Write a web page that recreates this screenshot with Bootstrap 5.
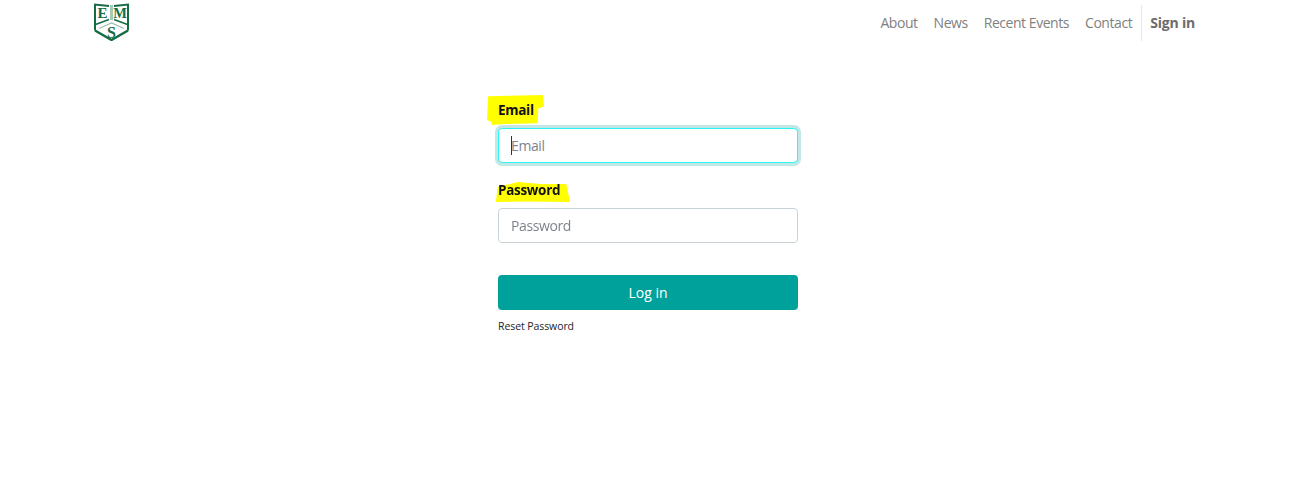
<!DOCTYPE html>
<html lang="en">
<head>
<meta charset="utf-8">
<title>Sign in</title>
<link href="https://cdn.jsdelivr.net/npm/bootstrap@5.3.0/dist/css/bootstrap.min.css" rel="stylesheet">
<style>
body { font-family: "Open Sans", "Noto Sans", sans-serif; background: #fff; color: #212529; font-size: 14px; }
.navbar.top-shell { width: 1299px; padding: 0 104px 0 93px; height: 46px; }
.brand-mark { width: 37px; height: 41px; display: block; }
.brand-link { padding: 0; margin: 0; align-self: flex-start; }
.menu-link { color: #7f7f7f; font-size: 14px; padding: 0 8px; height: 36px; line-height: 36px; letter-spacing: -.45px; text-decoration: none; }
.menu-contact { padding-right: 9px; }
.menu-signin { color: #6c6c6c; font-weight: 700; border-left: 1px solid #e7e7e7; padding-left: 8px; padding-right: 0; letter-spacing: -.2px; }
.form-shell { width: 300px; margin: 52px 0 0 498px; }
.mark-wrap { position: relative; display: block; height: 24px; margin-bottom: 6px; }
.mark-text { position: relative; font-size: 13.5px; font-weight: 700; line-height: 24px; color: #111; letter-spacing: -.3px; }
.swipe { position: absolute; background: #ffff00; }
.swipe-email { left: -11px; top: -3px; width: 57px; height: 30px; clip-path: polygon(2% 4%, 98% 0, 100% 38%, 90% 45%, 89% 94%, 30% 97%, 9% 100%, 7% 88%, 0 84%); }
.swipe-pass { left: -2px; top: 4px; width: 74px; height: 20px; clip-path: polygon(2% 25%, 30% 0, 60% 10%, 95% 10%, 100% 100%, 40% 98%, 0 100%); }
.field-box { position: relative; }
.field-box-caret::after { content: ""; position: absolute; left: 13px; top: 8px; width: 1px; height: 19px; background: #333; }
.field { height: 35px; font-size: 14px; border: 1px solid #c9d3d8; border-radius: 4px; padding: 0 12px; color: #495057; box-shadow: none; letter-spacing: -.4px; }
.field::placeholder { color: #7d848b; }
.field:focus { border-color: #2ff5f5; box-shadow: 0 0 0 3px #c2e8e6; outline: 0; }
.field-gap { margin-bottom: 15px; }
.submit-btn { background: #00a19b; border: 0; color: #fff; font-size: 14px; height: 35px; border-radius: 4px; margin-top: 32px; padding: 0; }
.submit-btn:hover { background: #00a19b; color: #fff; }
.reset-link { display: block; margin-top: 9px; font-size: 10.5px; color: #212529; text-decoration: none; line-height: 14px; letter-spacing: -.08px; }
</style>
</head>
<body>
<nav class="navbar top-shell align-items-center flex-nowrap">
  <a class="navbar-brand brand-link" href="#">
    <svg class="brand-mark" viewBox="0 0 37 41" role="img" aria-label="EMS logo">
      <path d="M2 30.500V4.500L16 6M35 30.500V4.500L21 6" fill="none" stroke="#146c43" stroke-width="2"/>
      <path d="M18.500 5v15" stroke="#a9c9b7" stroke-width="3"/>
      <path d="M2 30.500 18.500 40 35 30.500" fill="none" stroke="#146c43" stroke-width="2.400"/>
      <path d="M2.500 24.500 16 19.500M34.500 24.500 21 19.500" fill="none" stroke="#146c43" stroke-width="1.500"/>
      <path d="M6 28.500 18.500 23 31 28.500" fill="none" stroke="#9dbfad" stroke-width="1.300"/>
      <text x="9.500" y="17.500" text-anchor="middle" font-family="Liberation Serif, serif" font-weight="700" font-size="15" fill="#146c43">E</text>
      <text x="27" y="17.500" text-anchor="middle" font-family="Liberation Serif, serif" font-weight="700" font-size="14.500" fill="#146c43">M</text>
      <text x="18.500" y="37.500" text-anchor="middle" font-family="Liberation Serif, serif" font-weight="700" font-size="16" fill="#146c43">S</text>
    </svg>
  </a>
  <div class="d-flex align-items-center">
    <a class="menu-link" href="#">About</a>
    <a class="menu-link" href="#">News</a>
    <a class="menu-link" href="#">Recent Events</a>
    <a class="menu-link menu-contact" href="#">Contact</a>
    <a class="menu-link menu-signin" href="#">Sign in</a>
  </div>
</nav>
<main class="form-shell">
  <form>
    <label class="mark-wrap" for="email"><span class="swipe swipe-email"></span><span class="mark-text">Email</span></label>
    <div class="field-box field-box-caret field-gap"><input id="email" class="form-control field" type="email" placeholder="Email" autofocus></div>
    <label class="mark-wrap" for="password"><span class="swipe swipe-pass"></span><span class="mark-text">Password</span></label>
    <div class="field-box"><input id="password" class="form-control field" type="password" placeholder="Password"></div>
    <button class="btn w-100 d-block submit-btn" type="button">Log in</button>
    <a class="reset-link" href="#">Reset Password</a>
  </form>
</main>
</body>
</html>
